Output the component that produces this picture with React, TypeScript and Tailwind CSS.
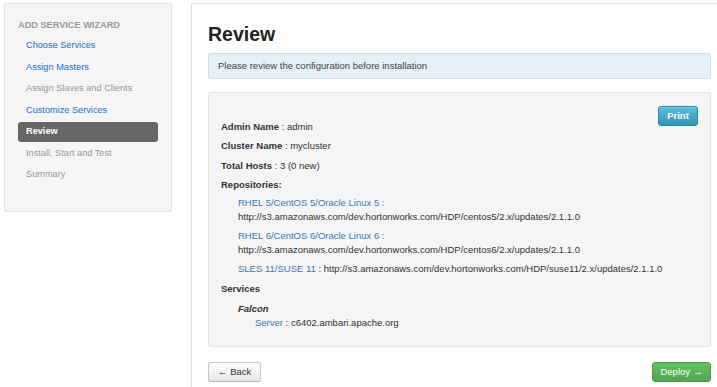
import React from 'react';

const steps = [
  { name: 'Choose Services', state: 'link' },
  { name: 'Assign Masters', state: 'link' },
  { name: 'Assign Slaves and Clients', state: 'disabled' },
  { name: 'Customize Services', state: 'link' },
  { name: 'Review', state: 'active' },
  { name: 'Install, Start and Test', state: 'disabled' },
  { name: 'Summary', state: 'disabled' },
];

const repos = [
  {
    os: 'RHEL 5/CentOS 5/Oracle Linux 5',
    url: 'http://s3.amazonaws.com/dev.hortonworks.com/HDP/centos5/2.x/updates/2.1.1.0',
    wrap: true,
  },
  {
    os: 'RHEL 6/CentOS 6/Oracle Linux 6',
    url: 'http://s3.amazonaws.com/dev.hortonworks.com/HDP/centos6/2.x/updates/2.1.1.0',
    wrap: true,
  },
  {
    os: 'SLES 11/SUSE 11',
    url: 'http://s3.amazonaws.com/dev.hortonworks.com/HDP/suse11/2.x/updates/2.1.1.0',
    wrap: false,
  },
];

const Sidebar: React.FC = () => (
  <div className="w-[168px] h-[209px] shrink-0 border border-[#e3e3e3] bg-[#f5f5f5] rounded-[2px] pt-[14px] px-[13px]">
    <div className="h-[14px] leading-[14px] text-[9.2px] font-bold uppercase text-[#999] mb-[3.5px]">
      Add Service Wizard
    </div>
    {steps.map(step => (
      <div key={step.name} className="h-[21.5px] flex items-center">
        {step.state === 'active' ? (
          <div className="w-full h-[20px] flex items-center px-[8px] bg-[#666] rounded-[3px] text-white font-bold text-[9.2px]">
            {step.name}
          </div>
        ) : (
          <span
            className={`px-[8px] text-[9.2px] ${
              step.state === 'link' ? 'text-[#1a6fc9]' : 'text-[#999]'
            }`}
          >
            {step.name}
          </span>
        )}
      </div>
    ))}
  </div>
);

const Field: React.FC<{ label: string; value: string }> = ({ label, value }) => (
  <p className="leading-[14px] mb-[5.5px]">
    <span className="font-bold">{label}</span> : {value}
  </p>
);

export default function App() {
  return (
    <div className="w-[717px] h-[387px] overflow-hidden bg-white flex pt-[3px] pl-[4px] font-['Liberation_Sans',Arial,sans-serif] text-[9.5px] text-[#333]">
      <Sidebar />

      {/* main panel */}
      <div className="ml-[19px] w-[538px] h-[400px] shrink-0 border-l border-t border-[#e3e3e3] pt-[18px] pl-[16px] pr-[18px]">
        <h2 className="text-[19.5px] font-bold leading-[24px] text-[#222]">Review</h2>

        <div className="mt-[7px] h-[26px] border border-[#cbdde7] bg-[#e5eff5] rounded-[2px] px-[9px] flex items-center text-[#444]">
          Please review the configuration before installation
        </div>

        <div className="mt-[13px] h-[255px] border border-[#e3e3e3] bg-[#f5f5f5] rounded-[2px] pt-[13px] px-[12px]">
          <button className="float-right w-[40px] h-[20px] rounded-[3px] border border-[#2a85a0] bg-gradient-to-b from-[#5bc0de] to-[#2f96b4] text-white font-bold text-[9.5px] leading-none shadow-[inset_0_1px_0_rgba(255,255,255,0.2)]">
            Print
          </button>
          <div className="pt-[13.5px]">
            <Field label="Admin Name" value="admin" />
            <Field label="Cluster Name" value="mycluster" />
            <Field label="Total Hosts" value="3 (0 new)" />
            <p className="leading-[14px] mb-[4px] font-bold">Repositories:</p>
            <div className="pl-[17px]">
              {repos.map(repo => (
                <div key={repo.os} className="mb-[5px] leading-[14px]">
                  {repo.wrap ? (
                    <>
                      <div className="text-[#3c78b5]">{repo.os} :</div>
                      <div>{repo.url}</div>
                    </>
                  ) : (
                    <div>
                      <span className="text-[#3c78b5]">{repo.os}</span> : {repo.url}
                    </div>
                  )}
                </div>
              ))}
            </div>
            <p className="leading-[14px] mt-[6px] mb-[6px] font-bold">Services</p>
            <div className="pl-[17px]">
              <div className="leading-[14px] font-bold italic">Falcon</div>
              <div className="leading-[13px] pl-[17px]">
                <span className="text-[#3c78b5]">Server</span> : c6402.ambari.apache.org
              </div>
            </div>
          </div>
        </div>

        <div className="mt-[15px] flex justify-between">
          <button className="w-[53px] h-[20px] rounded-[3px] border border-[#c8c8c8] border-b-[#b3b3b3] bg-gradient-to-b from-white to-[#e6e6e6] text-[#333] text-[9.5px] leading-none flex items-center justify-center gap-[3px]">
            <span>←</span>
            <span>Back</span>
          </button>
          <button className="w-[59px] h-[20px] rounded-[3px] border border-[#4a9a4a] bg-gradient-to-b from-[#62c462] to-[#51a351] text-white text-[9.5px] leading-none flex items-center justify-center gap-[3px]">
            <span>Deploy</span>
            <span>→</span>
          </button>
        </div>
      </div>
    </div>
  );
}
